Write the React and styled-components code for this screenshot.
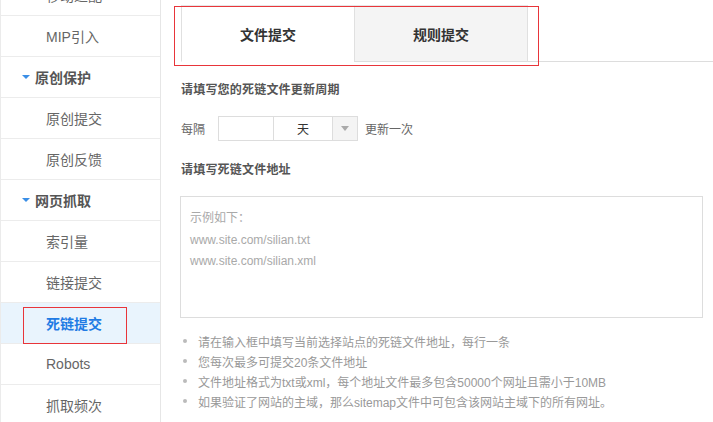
import React from "react";
import styled, { createGlobalStyle } from "styled-components";

const GlobalStyle = createGlobalStyle`
  html, body {
    margin: 0;
    padding: 0;
    background: #fff;
  }
  body {
    font-family: "Liberation Sans", "Noto Sans CJK SC", sans-serif;
    -webkit-font-smoothing: antialiased;
  }
`;

const Page = styled.div`
  display: flex;
  width: 713px;
  height: 422px;
  overflow: hidden;
  background: #fff;
`;

const Sidebar = styled.nav`
  flex: none;
  width: 161px;
  box-sizing: border-box;
  border-left: 1px solid #ebebeb;
  border-right: 1px solid #e6e6e6;
  overflow: hidden;
`;

const NavList = styled.ul`
  list-style: none;
  margin: -25px 0 0;
  padding: 0;
`;

const NavItem = styled.li`
  position: relative;
  display: flex;
  align-items: center;
  height: 40px;
  border-bottom: 1px solid #ececec;
  padding-left: ${p => (p.$group ? "21px" : "45px")};
  font-size: 14px;
  color: ${p => (p.$active ? "#1f7be4" : p.$group ? "#555" : "#666")};
  font-weight: ${p => (p.$group || p.$active ? "bold" : "normal")};
  background: ${p => (p.$active ? "#e9f4fd" : "transparent")};
`;

const Caret = styled.span`
  width: 0;
  height: 0;
  margin-right: 5px;
  border-left: 4px solid transparent;
  border-right: 4px solid transparent;
  border-top: 4px solid #3a8ee6;
`;

const Mark = styled.span`
  position: absolute;
  pointer-events: none;
  border: 1px solid #e8353a;
  left: ${p => p.$left}px;
  top: ${p => p.$top}px;
  width: ${p => p.$width}px;
  height: ${p => p.$height}px;
  box-sizing: border-box;
`;

const Main = styled.main`
  flex: 1;
  min-width: 0;
  padding: 5px 0 0 20px;
`;

const TabBar = styled.div`
  position: relative;
  display: flex;
  border-bottom: 1px solid #dddddd;
`;

const Tab = styled.div`
  display: flex;
  align-items: center;
  justify-content: center;
  box-sizing: border-box;
  width: ${p => (p.$active ? "173px" : "174px")};
  height: 57px;
  margin-bottom: -1px;
  border-top: 1px solid #e6e6e6;
  border-left: 1px solid #e0e0e0;
  border-right: ${p => (p.$active ? "none" : "1px solid #e0e0e0")};
  border-bottom: 1px solid ${p => (p.$active ? "#fff" : "#dddddd")};
  background: ${p => (p.$active ? "#fff" : "#f4f4f4")};
  font-size: 14px;
  font-weight: bold;
  color: #333;
`;

const Content = styled.div`
  padding-right: 10px;
`;

const Title = styled.h3`
  margin: ${p => p.$mt}px 0 0;
  font-size: 12px;
  line-height: 20px;
  font-weight: bold;
  color: #555;
  letter-spacing: 0.2px;
`;

const PeriodRow = styled.div`
  display: flex;
  align-items: center;
  margin-top: 16px;
  font-size: 12px;
  color: #666;
`;

const Picker = styled.div`
  display: flex;
  box-sizing: border-box;
  height: 25px;
  margin: 0 7px 0 13px;
  border: 1px solid #dddddd;
  background: #fff;
`;

const Cell = styled.div`
  display: flex;
  align-items: center;
  justify-content: center;
  width: ${p => p.$w}px;
  border-right: ${p => (p.$sep ? "1px solid #dddddd" : "none")};
  background: ${p => (p.$gray ? "#f4f4f4" : "transparent")};
  color: #333;
  font-size: 12px;
`;

const DownArrow = styled.span`
  width: 0;
  height: 0;
  border-left: 4px solid transparent;
  border-right: 4px solid transparent;
  border-top: 5px solid #aaa;
`;

const TextBox = styled.div`
  box-sizing: border-box;
  height: 122px;
  margin: 16px 0 0 -1px;
  padding: 11px 9px;
  border: 1px solid #dddddd;
  font-size: 12px;
  line-height: 21.5px;
  color: #a9a9a9;
`;

const Hints = styled.ul`
  list-style: none;
  margin: 13px 0 0;
  padding: 0;
`;

const Hint = styled.li`
  display: flex;
  align-items: center;
  height: 20px;
  font-size: 12px;
  color: #999;
  white-space: nowrap;
`;

const Dot = styled.span`
  width: 4px;
  height: 4px;
  margin: 0 11px 0 2px;
  border-radius: 50%;
  background: #bbb;
`;

const navItems = [
  { label: "移动适配" },
  { label: "MIP引入" },
  { label: "原创保护", group: true },
  { label: "原创提交" },
  { label: "原创反馈" },
  { label: "网页抓取", group: true },
  { label: "索引量" },
  { label: "链接提交" },
  { label: "死链提交", active: true },
  { label: "Robots" },
  { label: "抓取频次" },
];

const hints = [
  "请在输入框中填写当前选择站点的死链文件地址，每行一条",
  "您每次最多可提交20条文件地址",
  "文件地址格式为txt或xml，每个地址文件最多包含50000个网址且需小于10MB",
  "如果验证了网站的主域，那么sitemap文件中可包含该网站主域下的所有网址。",
];

const App = () => {
  return (
    <>
      <GlobalStyle />
      <Page>
        <Sidebar>
          <NavList>
            {navItems.map(item => (
              <NavItem key={item.label} $group={item.group} $active={item.active}>
                {item.group && <Caret />}
                {item.label}
                {item.active && <Mark $left={22} $top={4} $width={104} $height={37} />}
              </NavItem>
            ))}
          </NavList>
        </Sidebar>

        <Main>
          <TabBar>
            <Tab $active>文件提交</Tab>
            <Tab>规则提交</Tab>
            <Mark $left={-7} $top={1} $width={365} $height={60} />
          </TabBar>

          <Content>
            <Title $mt={18}>请填写您的死链文件更新周期</Title>
            <PeriodRow>
              每隔
              <Picker>
                <Cell $w={54} $sep />
                <Cell $w={58} $sep>天</Cell>
                <Cell $w={24} $gray>
                  <DownArrow />
                </Cell>
              </Picker>
              更新一次
            </PeriodRow>

            <Title $mt={19}>请填写死链文件地址</Title>
            <TextBox>
              示例如下：
              <br />
              www.site.com/silian.txt
              <br />
              www.site.com/silian.xml
            </TextBox>

            <Hints>
              {hints.map(text => (
                <Hint key={text}>
                  <Dot />
                  {text}
                </Hint>
              ))}
            </Hints>
          </Content>
        </Main>
      </Page>
    </>
  );
};

export default App;
